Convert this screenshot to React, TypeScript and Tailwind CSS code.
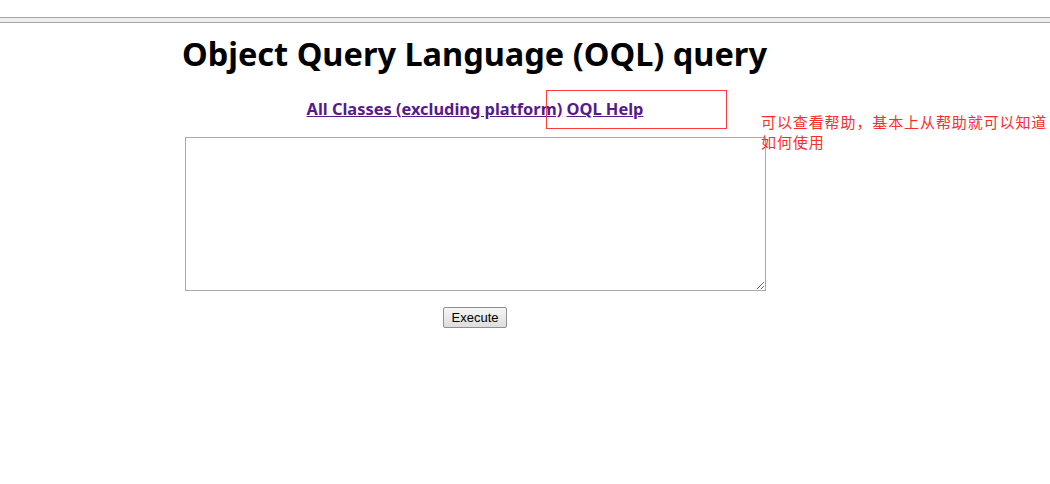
export default function App() {
  return (
    <div className="relative w-[1050px] h-[484px] bg-white overflow-hidden font-['Noto_Sans','Open_Sans',sans-serif]">
      {/* Top rule */}
      <div className="pt-[17px]">
        <div className="h-[6px] border-y border-[#a6a6a6] bg-[#eeeeee]" />
      </div>

      <div className="ml-[182px] w-[586px] flex flex-col">
        <h1 className="text-[32.5px] leading-[40px] font-bold text-black mt-[11px] whitespace-nowrap">
          Object Query Language (OQL) query
        </h1>

        <div className="mt-[23px] text-center text-[16.4px] font-bold leading-[24px] text-[#551a8b]">
          <a href="#" className="underline">All Classes (excluding platform)</a>{" "}
          <a href="#" className="underline">OQL Help</a>
        </div>

        <textarea className="mt-[16px] ml-[3px] w-[581px] h-[154px] border border-[#a9a9a9] bg-white resize" />

        <div className="mt-[16px] flex justify-center">
          <button className="h-[21px] px-[8px] border border-[#8f8f8f] rounded-[2px] bg-gradient-to-b from-[#f6f6f6] to-[#dddddd] text-[13px] leading-[19px] text-black font-['Liberation_Sans',Arial,sans-serif]">
            Execute
          </button>
        </div>
      </div>

      {/* Annotation */}
      <div className="absolute left-[546px] top-[90px] w-[181px] h-[39px] border border-[#ff3b3b]" />
      <div className="absolute left-[761px] top-[112px] w-[289px] text-[15px] tracking-[0.9px] leading-[20px] text-[#ff2b2b] font-['Noto_Sans_CJK_SC',sans-serif]">
        可以查看帮助，基本上从帮助就可以知道如何使用
      </div>
    </div>
  );
}
